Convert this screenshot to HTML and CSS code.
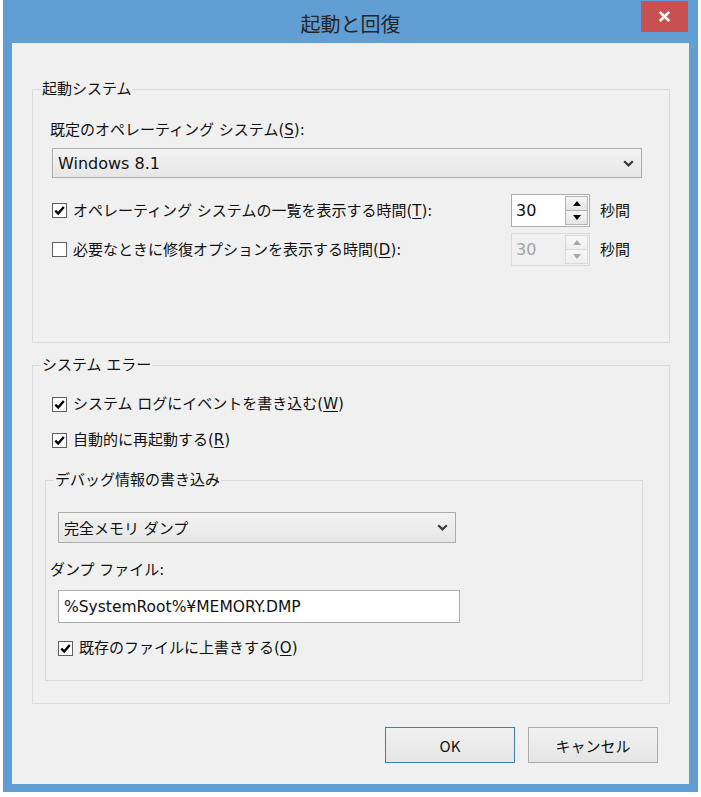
FILE: index.html
```html
<!DOCTYPE html>
<html lang="ja">
<head>
<meta charset="utf-8">
<title>起動と回復</title>
<link rel="stylesheet" href="styles.css">
</head>
<body>
<div class="window">
  <div class="titlebar">
    <div class="title">起動と回復</div>
    <button class="close" type="button" aria-label="閉じる">
      <svg width="13" height="11" viewBox="0 0 13 11"><path d="M1.8 1 L11.2 10 M11.2 1 L1.8 10" stroke="#fff" stroke-width="2.6" fill="none"/></svg>
    </button>
  </div>
  <div class="panel">
    <fieldset class="group group-startup">
      <legend>起動システム</legend>
      <div class="body body-startup">
        <div class="field-label">既定のオペレーティング システム(<u>S</u>):</div>
        <div class="combo combo-os">
          <span class="latin">Windows 8.1</span>
          <svg class="chev" width="11" height="7" viewBox="0 0 11 7"><path d="M1.2 1.2 L5.5 5.4 L9.8 1.2" stroke="#3c3c3c" stroke-width="2.2" fill="none"/></svg>
        </div>
        <div class="timer-row">
          <div class="check">
            <span class="box"><svg width="13" height="13" viewBox="0 0 13 13"><path d="M2.3 6.6 L5.2 9.5 L10.8 3" stroke="#000" stroke-width="2.4" fill="none"/></svg></span>
            <span>オペレーティング システムの一覧を表示する時間(<u>T</u>):</span>
          </div>
          <div class="spin">
            <span class="spin-value latin">30</span>
            <span class="spin-btns">
              <span class="spin-btn"><svg width="8" height="5" viewBox="0 0 8 5"><path d="M4 0 L8 5 L0 5 Z" fill="#000"/></svg></span>
              <span class="spin-btn"><svg width="8" height="5" viewBox="0 0 8 5"><path d="M0 0 L8 0 L4 5 Z" fill="#000"/></svg></span>
            </span>
          </div>
          <span class="unit">秒間</span>
        </div>
        <div class="timer-row second">
          <div class="check">
            <span class="box"></span>
            <span>必要なときに修復オプションを表示する時間(<u>D</u>):</span>
          </div>
          <div class="spin disabled">
            <span class="spin-value latin">30</span>
            <span class="spin-btns">
              <span class="spin-btn"><svg width="8" height="5" viewBox="0 0 8 5"><path d="M4 0 L8 5 L0 5 Z" fill="#a8a8a8"/></svg></span>
              <span class="spin-btn"><svg width="8" height="5" viewBox="0 0 8 5"><path d="M0 0 L8 0 L4 5 Z" fill="#a8a8a8"/></svg></span>
            </span>
          </div>
          <span class="unit">秒間</span>
        </div>
      </div>
    </fieldset>

    <fieldset class="group group-error">
      <legend>システム エラー</legend>
      <div class="body body-error">
        <div class="check">
          <span class="box"><svg width="13" height="13" viewBox="0 0 13 13"><path d="M2.3 6.6 L5.2 9.5 L10.8 3" stroke="#000" stroke-width="2.4" fill="none"/></svg></span>
          <span>システム ログにイベントを書き込む(<u>W</u>)</span>
        </div>
        <div class="check check-restart">
          <span class="box"><svg width="13" height="13" viewBox="0 0 13 13"><path d="M2.3 6.6 L5.2 9.5 L10.8 3" stroke="#000" stroke-width="2.4" fill="none"/></svg></span>
          <span>自動的に再起動する(<u>R</u>)</span>
        </div>
        <fieldset class="subgroup">
          <legend>デバッグ情報の書き込み</legend>
          <div class="body body-debug">
            <div class="combo combo-dump">
              <span>完全メモリ ダンプ</span>
              <svg class="chev" width="11" height="7" viewBox="0 0 11 7"><path d="M1.2 1.2 L5.5 5.4 L9.8 1.2" stroke="#3c3c3c" stroke-width="2.2" fill="none"/></svg>
            </div>
            <div class="field-label dump-label">ダンプ ファイル:</div>
            <div class="textbox"><span class="latin path">%SystemRoot%¥MEMORY.DMP</span></div>
            <div class="check check-overwrite">
              <span class="box"><svg width="13" height="13" viewBox="0 0 13 13"><path d="M2.3 6.6 L5.2 9.5 L10.8 3" stroke="#000" stroke-width="2.4" fill="none"/></svg></span>
              <span>既存のファイルに上書きする(<u>O</u>)</span>
            </div>
          </div>
        </fieldset>
      </div>
    </fieldset>

    <div class="buttons">
      <button class="btn btn-default" type="button">OK</button>
      <button class="btn" type="button">キャンセル</button>
    </div>
  </div>
</div>
</body>
</html>
```

FILE: styles.css
```css
* { box-sizing: border-box; }

html, body {
  margin: 0;
  padding: 0;
  background: #ffffff;
}

body {
  font-family: "DejaVu Sans", "Noto Sans CJK JP", sans-serif;
  font-size: 15px;
  color: #111;
}

u {
  text-decoration: underline;
  text-decoration-thickness: 1px;
  text-underline-offset: 2px;
}

.latin {
  font-family: "DejaVu Sans", sans-serif;
  font-size: 16px;
}

.latin.path {
  font-size: 15.5px;
}

.window {
  width: 695px;
  height: 792px;
  margin-left: 3px;
  background: #609ed3;
  display: flex;
  flex-direction: column;
}

.titlebar {
  height: 43px;
  display: grid;
  grid-template-columns: 1fr auto 1fr;
}

.title {
  grid-column: 2;
  font-family: "Noto Sans CJK JP", sans-serif;
  font-size: 20px;
  line-height: 43px;
  padding-top: 2px;
  color: #262626;
}

.close {
  grid-column: 3;
  justify-self: end;
  align-self: start;
  margin: 1px 10px 0 0;
  width: 47px;
  height: 31px;
  padding: 0;
  border: 0;
  background: #c75050;
  display: flex;
  align-items: center;
  justify-content: center;
}

.panel {
  margin: 0 9px;
  height: 741px;
  background: #f0f0f0;
  padding-top: 36px;
}

.group {
  margin: 0 19px 0 20px;
  padding: 0;
  border: 1px solid #d9d9d9;
  min-width: 0;
}

.group legend,
.subgroup legend {
  margin-left: 8px;
  padding: 0 1px;
  line-height: 20px;
  font-size: 15px;
}

.body-startup {
  padding: 21px 0 76px 17px;
}

.field-label {
  line-height: 20px;
  height: 20px;
}

.combo {
  height: 30px;
  border: 1px solid #acacac;
  background: linear-gradient(#f3f3f3, #e6e6e6);
  display: flex;
  align-items: center;
  justify-content: space-between;
  padding: 0 7px 0 5px;
}

.combo-os {
  margin: 8px 0 0 2px;
  width: 590px;
}

.timer-row {
  margin: 16px 0 0 2px;
  display: grid;
  grid-template-columns: 459px 79px auto;
  align-items: center;
  height: 33px;
}

.timer-row.second {
  margin-top: 6px;
}

.check {
  display: flex;
  align-items: center;
  gap: 6px;
  line-height: 20px;
  height: 20px;
}

.box {
  flex: none;
  width: 15px;
  height: 15px;
  border: 1px solid #5e5e5e;
  background: #fff;
  display: flex;
  align-items: center;
  justify-content: center;
}

.spin {
  height: 33px;
  border: 1px solid #abadb3;
  background: #fff;
  display: flex;
  justify-content: space-between;
  padding: 1px;
}

.spin-value {
  line-height: 29px;
  padding-left: 3px;
}

.spin-btns {
  width: 23px;
  display: flex;
  flex-direction: column;
}

.spin-btn {
  flex: 1;
  border: 1px solid #b4b4b4;
  background: linear-gradient(#f6f6f6, #e4e4e4);
  display: flex;
  align-items: center;
  justify-content: center;
}

.spin-btn + .spin-btn {
  border-top: 0;
}

.spin.disabled {
  border-color: #d9d9d9;
  background: #f0f0f0;
  color: #a3a3a3;
}

.spin.disabled .spin-btn {
  border-color: #dadada;
  background: linear-gradient(#f7f7f7, #eeeeee);
}

.unit {
  margin-left: 10px;
  line-height: 20px;
}

.group-error {
  margin-top: 12px;
}

.body-error {
  padding: 19px 0 22px 19px;
}

.check-restart {
  margin-top: 16px;
}

.subgroup {
  margin: 20px 26px 0 -7px;
  padding: 0;
  border: 1px solid #d9d9d9;
  min-width: 0;
}

.body-debug {
  padding: 22px 0 22px 4px;
}

.combo-dump {
  margin-left: 8px;
  width: 398px;
  height: 31px;
}

.dump-label {
  margin-top: 17px;
}

.textbox {
  margin: 10px 0 0 8px;
  width: 402px;
  height: 33px;
  border: 1px solid #abadb3;
  background: #fff;
  display: flex;
  align-items: center;
  padding-left: 5px;
}

.check-overwrite {
  margin: 15px 0 0 8px;
}

.buttons {
  margin: 23px 31px 0 0;
  display: flex;
  justify-content: flex-end;
  gap: 13px;
}

.btn {
  width: 130px;
  height: 36px;
  border: 1px solid #acacac;
  background: linear-gradient(#f1f1f1, #e5e5e5);
  font-family: "Noto Sans CJK JP", sans-serif;
  font-size: 15px;
  color: #111;
  padding: 0;
}

.btn-default {
  border-color: #3c7fb1;
}
```
